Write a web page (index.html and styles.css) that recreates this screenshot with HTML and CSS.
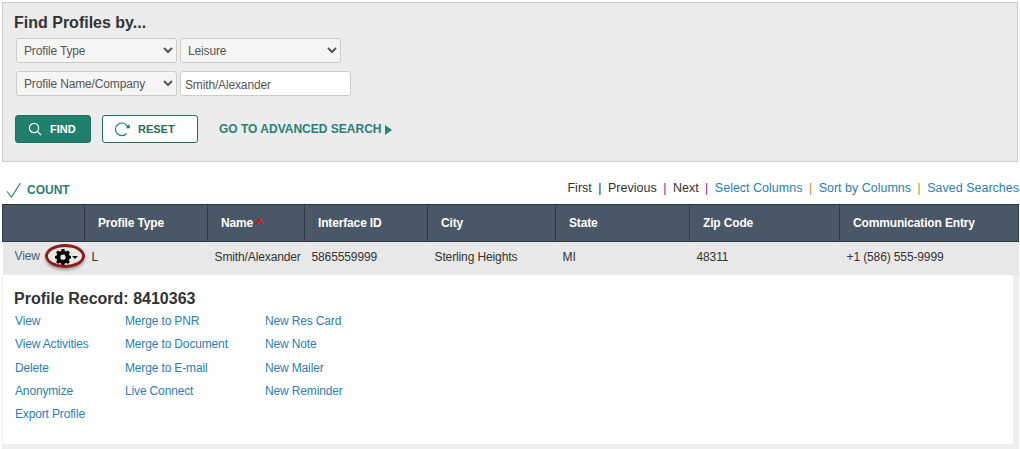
FILE: index.html
```html
<!DOCTYPE html>
<html lang="en">

<head>
  <meta charset="UTF-8">
  <title>Find Profiles</title>
  <link rel="stylesheet" href="styles.css">
</head>

<body>
  <!-- Search panel -->
  <div class="search-panel">
    <h3>Find Profiles by...</h3>
    <div class="field-row">
      <select class="field-select">
        <option>Profile Type</option>
      </select>
      <select class="field-select">
        <option>Leisure</option>
      </select>
    </div>
    <div class="field-row">
      <select class="field-select">
        <option>Profile Name/Company</option>
      </select>
      <input class="field-input" type="text" value="Smith/Alexander">
    </div>
    <div class="button-row">
      <button class="btn btn-find" type="button">
        <svg width="14" height="14" viewBox="0 0 14 14" fill="none" stroke="#fff" stroke-width="1.2">
          <circle cx="6" cy="6" r="4.6"/>
          <path d="M9.4 9.4L13 13"/>
        </svg>
        FIND
      </button>
      <button class="btn btn-reset" type="button">
        <svg width="17" height="16" viewBox="0 0 17 16" fill="none" stroke="#217f6d" stroke-width="1.2">
          <path d="M12.5 12.5A6.3 6.3 0 1 1 12.6 4.2L14 6"/>
          <path d="M11.8 7.2L16 7.2L15.3 3" stroke="none" fill="#217f6d"/>
        </svg>
        RESET
      </button>
      <a class="advanced-link" href="#">GO TO ADVANCED SEARCH<span class="arrow-right"></span></a>
    </div>
  </div>

  <!-- Results toolbar -->
  <div class="toolbar">
    <div class="count">
      <svg width="16" height="16" viewBox="0 0 16 16" fill="none" stroke="#217f6d" stroke-width="1.1">
        <path d="M1 9.5L5.5 15L14.5 1"/>
      </svg>
      COUNT
    </div>
    <div class="pager">
      <span>First</span><i class="sep sep-dark">|</i>
      <span>Previous</span><i class="sep sep-purple">|</i>
      <span>Next</span><i class="sep sep-purple">|</i>
      <a href="#">Select Columns</a><i class="sep">|</i>
      <a href="#">Sort by Columns</a><i class="sep">|</i>
      <a href="#">Saved Searches</a>
    </div>
  </div>

  <!-- Results -->
  <table class="results">
    <colgroup>
      <col class="col-actions">
      <col class="col-type">
      <col class="col-name">
      <col class="col-interface">
      <col class="col-city">
      <col class="col-state">
      <col class="col-zip">
      <col class="col-comm">
    </colgroup>
    <thead>
      <tr>
        <th></th>
        <th>Profile Type</th>
        <th>Name <span class="sort-mark">^</span></th>
        <th>Interface ID</th>
        <th>City</th>
        <th>State</th>
        <th>Zip Code</th>
        <th>Communication Entry</th>
      </tr>
    </thead>
    <tbody>
      <tr>
        <td class="action-cell">
          <a class="view-link" href="#">View</a>
          <svg class="gear" width="16" height="16" viewBox="0 0 16 16">
            <path fill-rule="evenodd" d="M6.6 0H9.4L9.8 2L11.2 2.6L12.9 1.5L14.9 3.5L13.8 5.2L14.4 6.6L16 7V9.4L14.4 9.8L13.8 11.2L14.9 12.9L12.9 14.9L11.2 13.8L9.8 14.4L9.4 16H6.6L6.2 14.4L4.8 13.8L3.1 14.9L1.1 12.9L2.2 11.2L1.6 9.8L0 9.4V7L1.6 6.6L2.2 5.2L1.1 3.5L3.1 1.5L4.8 2.6L6.2 2ZM8 5.6A2.6 2.6 0 1 0 8 10.8A2.6 2.6 0 1 0 8 5.6Z"/>
          </svg>
          <span class="caret"></span>
          <span class="highlight"></span>
        </td>
        <td>L</td>
        <td>Smith/Alexander</td>
        <td>5865559999</td>
        <td>Sterling Heights</td>
        <td>MI</td>
        <td>48311</td>
        <td>+1 (586) 555-9999</td>
      </tr>
    </tbody>
  </table>

  <!-- Expanded record -->
  <div class="record">
    <h3>Profile Record: 8410363</h3>
    <div class="record-links">
      <ul class="link-col link-col-1">
        <li><a href="#">View</a></li>
        <li><a href="#">View Activities</a></li>
        <li><a href="#">Delete</a></li>
        <li><a href="#">Anonymize</a></li>
        <li><a href="#">Export Profile</a></li>
      </ul>
      <ul class="link-col link-col-2">
        <li><a href="#">Merge to PNR</a></li>
        <li><a href="#">Merge to Document</a></li>
        <li><a href="#">Merge to E-mail</a></li>
        <li><a href="#">Live Connect</a></li>
      </ul>
      <ul class="link-col">
        <li><a href="#">New Res Card</a></li>
        <li><a href="#">New Note</a></li>
        <li><a href="#">New Mailer</a></li>
        <li><a href="#">New Reminder</a></li>
      </ul>
    </div>
  </div>
</body>

</html>
```

FILE: styles.css
```css
/* Global Styles */
html,
body {
  margin: 0;
  padding: 0;
  background-color: #fff;
  font-family: 'Liberation Sans', Arial, sans-serif;
  font-size: 12px;
  color: #333;
  overflow: hidden;
}

a {
  color: #2a7fb5;
  text-decoration: none;
}

/* Search panel */
.search-panel {
  box-sizing: border-box;
  width: 1016px;
  height: 160px;
  margin: 2px 0 0 2px;
  padding: 11px 11px 0;
  background-color: #ececec;
  border: 1px solid #ccc;
}

.search-panel h3 {
  margin: 0 0 6px;
  font-size: 16px;
  line-height: 18px;
  color: #333;
}

.field-row {
  display: flex;
  gap: 3px;
  margin: 0 0 8px 2px;
}

.field-select {
  box-sizing: border-box;
  width: 161px;
  height: 25px;
  padding: 0 3px;
  font-family: inherit;
  font-size: 12px;
  letter-spacing: -0.15px;
  color: #555;
  background-color: #f5f5f5;
  border: 1px solid #ccc;
  border-radius: 3px;
}

.field-input {
  box-sizing: border-box;
  width: 171px;
  height: 25px;
  padding: 2px 4px 0;
  font-family: inherit;
  font-size: 12px;
  letter-spacing: -0.15px;
  color: #555;
  background-color: #fff;
  border: 1px solid #ccc;
  border-radius: 3px;
}

.button-row {
  display: flex;
  align-items: center;
  margin: 19px 0 0 1px;
}

.btn {
  box-sizing: border-box;
  display: flex;
  align-items: center;
  height: 28px;
  padding: 0;
  font-family: inherit;
  font-size: 11px;
  font-weight: 700;
  border-radius: 3px;
  border: 1px solid #1f6f60;
}

.btn-find {
  width: 76px;
  gap: 8px;
  padding-left: 12px;
  color: #fff;
  background-color: #217f6d;
}

.btn-reset {
  width: 96px;
  gap: 7px;
  margin-left: 11px;
  padding-left: 11px;
  color: #2b6a60;
  background-color: #fff;
}

.advanced-link {
  margin-left: 21px;
  font-size: 12px;
  font-weight: 700;
  color: #2a8272;
}

.arrow-right {
  display: inline-block;
  margin-left: 4px;
  border-left: 7px solid #2a8272;
  border-top: 5px solid transparent;
  border-bottom: 5px solid transparent;
  vertical-align: -2px;
}

/* Toolbar */
.toolbar {
  display: flex;
  justify-content: space-between;
  align-items: center;
  height: 20px;
  margin: 16px 1px 0 6px;
}

.count {
  display: flex;
  align-items: center;
  gap: 5px;
  font-weight: 700;
  color: #2a8272;
  padding-top: 3px;
}

.pager {
  font-size: 12.5px;
  color: #333;
}

.pager a {
  color: #2a7fb5;
}

.sep {
  margin: 0 3px 0 6.5px;
  font-style: normal;
  color: #d08a35;
}

.sep-dark {
  color: #333;
}

.sep-purple {
  color: #8a2a8a;
}

/* Table Styles */
.results {
  table-layout: fixed;
  width: 1016px;
  margin: 6px 0 0 2px;
  border-collapse: collapse;
}

.col-actions { width: 82px; }
.col-type { width: 123px; }
.col-name { width: 97px; }
.col-interface { width: 123px; }
.col-city { width: 128px; }
.col-state { width: 134px; }
.col-zip { width: 150px; }
.col-comm { width: 179px; }

.results th {
  height: 36px;
  padding: 0 0 0 13px;
  text-align: left;
  font-size: 12px;
  letter-spacing: -0.15px;
  color: #fff;
  background-color: #4a5766;
  border: 1px solid #2f3a44;
}

.sort-mark {
  color: #f00;
}

.results td {
  height: 30px;
  padding: 0 0 3px 7px;
  letter-spacing: -0.12px;
  background-color: #e8e8e8;
  white-space: nowrap;
}

.action-cell {
  position: relative;
}

.results td.action-cell {
  padding-left: 12px;
}

.view-link {
  color: #3f5f78;
  position: relative;
  top: -1px;
}

.gear {
  margin-left: 12px;
  vertical-align: -4px;
}

.caret {
  display: inline-block;
  margin-left: -2px;
  border-top: 3px solid #111;
  border-left: 3px solid transparent;
  border-right: 3px solid transparent;
  vertical-align: 2px;
}

/* Red annotation ring round the gear */
.highlight {
  position: absolute;
  left: 42px;
  top: 2px;
  box-sizing: border-box;
  width: 40px;
  height: 24px;
  border: 3px solid #8f1c1c;
  border-radius: 50%;
  box-shadow: 0 2px 3px rgba(0, 0, 0, 0.35);
}

/* Expanded record */
.record {
  box-sizing: border-box;
  width: 1017px;
  height: 174px;
  margin-left: 2px;
  padding: 15px 0 0 12px;
  background-color: #fff;
  border-style: solid;
  border-color: #efefef;
  border-width: 0 6px 5px 1px;
}

.record h3 {
  margin: 0 0 2px -1px;
  font-size: 16px;
  line-height: 18px;
  color: #333;
}

.record-links {
  display: flex;
}

.link-col {
  margin: 0;
  padding: 0;
  list-style: none;
}

.link-col li {
  height: 23.3px;
  line-height: 23px;
  letter-spacing: -0.15px;
}

.link-col-1 {
  width: 110px;
}

.link-col-2 {
  width: 140px;
}
```
